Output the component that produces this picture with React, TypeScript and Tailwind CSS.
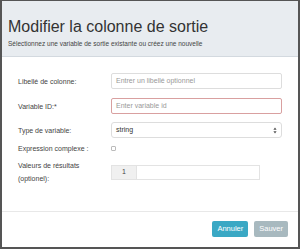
import React from 'react';

const labelCls = 'w-[93px] shrink-0 text-[7px] leading-[15px] text-[#444]';

export default function App() {
  return (
    <div
      className="w-[300px] h-[249px] bg-white border-[#555] border-t border-x-2 border-b-2 flex flex-col overflow-hidden"
      style={{ fontFamily: '"Liberation Sans", Arial, sans-serif' }}
    >
      <div className="h-[56px] shrink-0 bg-[#e8ecf0] border-b border-[#d3d9df] px-[6px] pt-[16px]">
        <h1 className="text-[16px] leading-[20px] text-[#333]">Modifier la colonne de sortie</h1>
        <p className="mt-[3px] text-[6.5px] leading-[8px] text-[#444]">
          Sélectionnez une variable de sortie existante ou créez une nouvelle
        </p>
      </div>

      <div className="flex-1 pl-[16px] pt-[16px] flex flex-col">
        <div className="flex items-center h-[16px]">
          <span className={labelCls}>Libellé de colonne:</span>
          <div className="w-[171px] h-[16px] border border-[#ddd] rounded-[2px] px-[4px] text-[7px] leading-[14px] text-[#999]">
            Entrer un libellé optionnel
          </div>
        </div>
        <div className="flex items-center h-[16px] mt-[9px]">
          <span className={labelCls}>Variable ID:*</span>
          <div className="w-[171px] h-[16px] border border-[#d9a0a0] rounded-[2px] px-[4px] text-[7px] leading-[14px] text-[#999]">
            Enter variable id
          </div>
        </div>
        <div className="flex items-center h-[16px] mt-[8px]">
          <span className={labelCls}>Type de variable:</span>
          <div className="w-[171px] h-[16px] border border-[#ddd] rounded-[3px] px-[4px] flex items-center justify-between text-[7px] text-[#333]">
            <span>string</span>
            <svg width="4" height="7" viewBox="0 0 4 7" className="text-[#555]">
              <path d="M2 0.5 L3.6 2.8 L0.4 2.8 Z" fill="currentColor" />
              <path d="M2 6.5 L3.6 4.2 L0.4 4.2 Z" fill="currentColor" />
            </svg>
          </div>
        </div>
        <div className="flex items-center h-[12px] mt-[4px]">
          <span className={labelCls}>Expression complexe :</span>
          <span className="w-[5px] h-[5px] border border-[#bbb] rounded-[1px]" />
        </div>
        <div className="flex items-start mt-[11px]">
          <span className="w-[93px] shrink-0 text-[7px] leading-[13px] text-[#444] -mt-[6px]">
            Valeurs de résultats
            <br />
            (optionel):
          </span>
          <div className="flex h-[15px] w-[149px] border border-[#e3e3e3]">
            <div className="w-[25px] bg-[#f0f0f0] border-r border-[#e3e3e3] flex items-center justify-center text-[7px] text-[#444]">
              1
            </div>
            <div className="flex-1" />
          </div>
        </div>
      </div>

      <div className="h-[36px] shrink-0 border-t border-[#e8e8e8] flex items-start justify-end gap-[6px] pt-[9px] pr-[10px]">
        <button className="h-[16px] px-[5px] bg-[#3aa8c4] rounded-[2px] text-white text-[7.5px] leading-[16px]">
          Annuler
        </button>
        <button className="h-[16px] px-[5px] bg-[#a8b9bf] rounded-[2px] text-white text-[7.5px] leading-[16px]">
          Sauver
        </button>
      </div>
    </div>
  );
}
